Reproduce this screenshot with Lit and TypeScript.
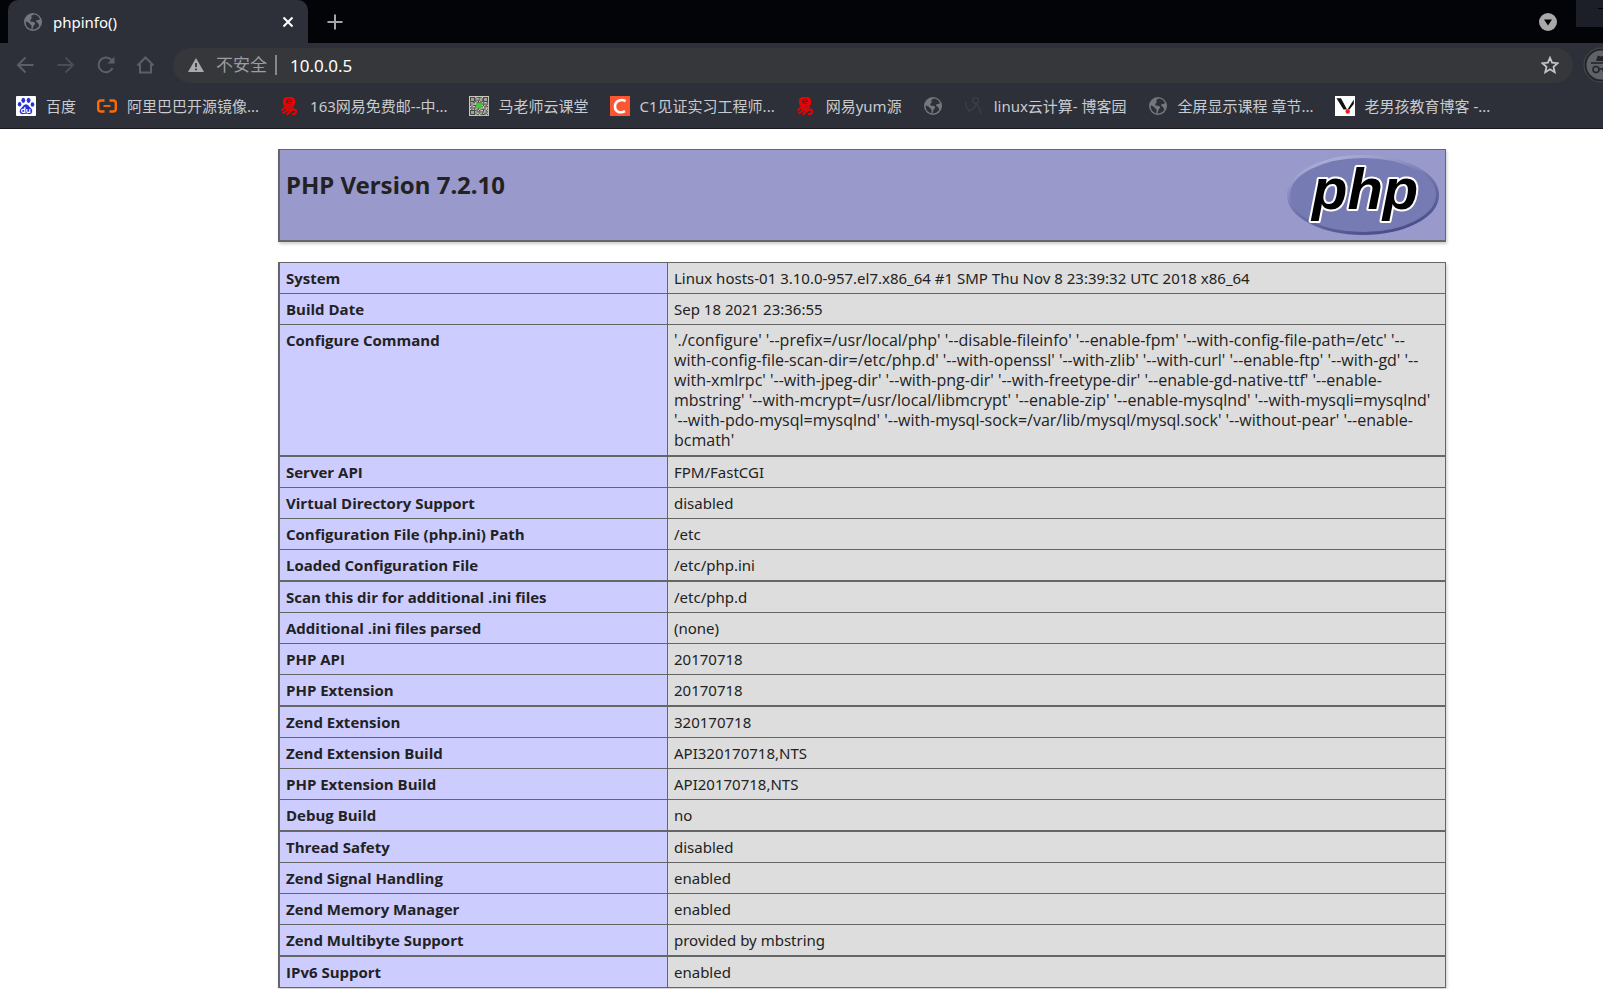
import { LitElement, html, css, svg, nothing } from "lit";
import { customElement, property } from "lit/decorators.js";

const globe = svg`<svg viewBox="0 0 20 20" width="20" height="20" aria-hidden="true">
  <circle cx="10" cy="10" r="9" fill="#74777c"/>
  <path d="M11.2 2.6C8.500 3 8 4.500 8.600 5.600C9.300 6.700 7.600 7.200 7.200 8.400C7 9.300 8 9.700 9.600 9.700C11.600 9.800 12.500 10.700 11.900 12C11.400 13 10.600 13.200 10.400 14.300C10.200 15.300 9.800 16.400 9.300 17.500C12.200 17.600 15 15.800 16.400 13.400C15.700 12.900 15.500 12.300 15.300 11.500C15 10.400 13.800 10.600 13.200 9.700C12.700 8.800 13.600 8 14.700 8C15.700 8 16.500 7.600 17 7.300C16.200 4.900 13.900 3 11.200 2.600Z" fill="#2d3039"/>
  <path d="M2.700 9.500C4.300 10 5.800 10.400 6.500 11.400C7.200 12.500 8.500 12.600 8.600 14C8.600 15.200 8.300 16.300 8.300 17.300C5 16.600 2.400 13.500 2.700 9.500Z" fill="#2d3039"/>
</svg>`;

const baidu = svg`<svg viewBox="0 0 20 20" width="20" height="20" aria-hidden="true">
  <rect width="20" height="20" rx="1" fill="#fff"/>
  <g fill="#2932d6">
    <ellipse cx="7.300" cy="4.300" rx="1.900" ry="2.600"/>
    <ellipse cx="12.600" cy="4.300" rx="1.900" ry="2.600"/>
    <ellipse cx="3.600" cy="8.300" rx="1.800" ry="2.300"/>
    <ellipse cx="16.500" cy="8.500" rx="1.800" ry="2.300"/>
    <path d="M10 8.200C12.300 8.200 12.800 10.600 14.700 12C17.200 14 16.600 18.200 13.400 18.200C12 18.200 11.200 17.800 10 17.800C8.800 17.800 8 18.200 6.600 18.200C3.300 18.200 2.800 14.200 5.300 12C7.200 10.500 7.700 8.200 10 8.200Z"/>
  </g>
  <path d="M8.800 11V16.300H6.800C5.200 16.300 5.200 13.400 6.800 13.400H8.800M10.800 13V15.400Q10.800 16.300 12 16.300H13.800V13" fill="none" stroke="#fff" stroke-width="1.200"/>
</svg>`;

const aliyun = svg`<svg viewBox="0 0 20 20" width="20" height="20" aria-hidden="true">
  <path d="M7.500 4.500H4Q1.200 4.500 1.200 7V13Q1.200 15.500 4 15.500H7.500M12.500 4.500H16Q18.800 4.500 18.800 7V13Q18.800 15.500 16 15.500H12.500" fill="none" stroke="#ff6a00" stroke-width="2.400"/>
  <path d="M6.500 10H13.500" stroke="#ff6a00" stroke-width="1.800"/>
</svg>`;

const netease = svg`<svg viewBox="0 0 20 20" width="20" height="20" aria-hidden="true">
  <rect x="3" y="1" width="12" height="9.500" rx="4" fill="#f00000"/>
  <path d="M6.600 5.500H11.400Q11.200 3.200 9 3.200Q6.700 3.300 6.600 5.600Q6.800 8 11.200 7.500" fill="none" stroke="#2d3039" stroke-width="1.100"/>
  <path d="M3.500 11.500H14M7 10.500L1.500 14.500M6 13.700H14.500Q16.500 13.800 16 16Q15.500 18.700 12 18M8.500 13.500L2.500 17.500M12.600 13.500L6.600 18.700" fill="none" stroke="#f00000" stroke-width="1.900"/>
</svg>`;

const qrCells = Array.from({ length: 196 }, (_, i) => i).filter((i) => {
  const x = i % 14;
  const y = Math.floor(i / 14);
  return (x * 7 + y * 11 + x * y * 5 + ((x * x + y) % 3)) % 5 < 3;
});

const qr = svg`<svg viewBox="0 0 20 20" width="20" height="20" aria-hidden="true">
  <rect width="20" height="20" fill="#c9c9c0"/>
  ${qrCells.map((i) => svg`<rect x=${1 + (i % 14) * 1.3} y=${1 + Math.floor(i / 14) * 1.3} width="1.2" height="1.2" fill="#45483f"/>`)}
  <path d="M1.500 1.500h4v4h-4zM14.500 1.500h4v4h-4zM1.500 14.500h4v4h-4z" fill="#a0a098" stroke="#45483f"/>
  <rect x="7.500" y="7.500" width="5" height="4.500" rx="1.500" fill="#22dd1c"/>
</svg>`;

const csdn = svg`<svg viewBox="0 0 20 20" width="20" height="20" aria-hidden="true">
  <rect width="20" height="20" fill="#fc5531"/>
  <path d="M15.600 5.200C12.500 3.300 5.300 3.300 5 10.300C4.800 16.600 11 17.300 15 15.200" fill="none" stroke="#fff" stroke-width="2.600"/>
</svg>`;

const cnblogs = svg`<svg viewBox="0 0 20 20" width="20" height="20" aria-hidden="true">
  <g fill="none" stroke="#443f43" stroke-width="1.200">
    <circle cx="11.500" cy="4.500" r="3"/>
    <path d="M2 6C1.500 10 3 13 5.500 14.500C9 13.500 11.500 11 12.500 7.500M13 8C15 11 16.500 14 17 18M5.500 14.500L4.500 16"/>
  </g>
</svg>`;

const oldboy = svg`<svg viewBox="0 0 20 20" width="20" height="20" aria-hidden="true">
  <rect width="20" height="20" fill="#fff"/>
  <path d="M1.500 2.300H6L12 13.500H8.500Z" fill="#111"/>
  <path d="M18.800 3.500V8L14.500 13.500H12.500Z" fill="#111"/>
  <circle cx="12.700" cy="15.500" r="2.200" fill="#f01c1c"/>
</svg>`;

const bookmarks = [
  { icon: baidu, label: "百度" },
  { icon: aliyun, label: "阿里巴巴开源镜像..." },
  { icon: netease, label: "163网易免费邮--中..." },
  { icon: qr, label: "马老师云课堂" },
  { icon: csdn, label: "C1见证实习工程师..." },
  { icon: netease, label: "网易yum源" },
  { icon: globe, label: "" },
  { icon: cnblogs, label: "linux云计算- 博客园" },
  { icon: globe, label: "全屏显示课程 章节..." },
  { icon: oldboy, label: "老男孩教育博客 -..." },
];

const configure = [
  "'./configure' '--prefix=/usr/local/php' '--disable-fileinfo' '--enable-fpm' '--with-config-file-path=/etc' '--",
  "with-config-file-scan-dir=/etc/php.d' '--with-openssl' '--with-zlib' '--with-curl' '--enable-ftp' '--with-gd' '--",
  "with-xmlrpc' '--with-jpeg-dir' '--with-png-dir' '--with-freetype-dir' '--enable-gd-native-ttf' '--enable-",
  "mbstring' '--with-mcrypt=/usr/local/libmcrypt' '--enable-zip' '--enable-mysqlnd' '--with-mysqli=mysqlnd'",
  "'--with-pdo-mysql=mysqlnd' '--with-mysql-sock=/var/lib/mysql/mysql.sock' '--without-pear' '--enable-",
  "bcmath'",
].join("\n");

const rows: [string, string][] = [
  ["System", "Linux hosts-01 3.10.0-957.el7.x86_64 #1 SMP Thu Nov 8 23:39:32 UTC 2018 x86_64"],
  ["Build Date", "Sep 18 2021 23:36:55"],
  ["Configure Command", configure],
  ["Server API", "FPM/FastCGI"],
  ["Virtual Directory Support", "disabled"],
  ["Configuration File (php.ini) Path", "/etc"],
  ["Loaded Configuration File", "/etc/php.ini"],
  ["Scan this dir for additional .ini files", "/etc/php.d"],
  ["Additional .ini files parsed", "(none)"],
  ["PHP API", "20170718"],
  ["PHP Extension", "20170718"],
  ["Zend Extension", "320170718"],
  ["Zend Extension Build", "API320170718,NTS"],
  ["PHP Extension Build", "API20170718,NTS"],
  ["Debug Build", "no"],
  ["Thread Safety", "disabled"],
  ["Zend Signal Handling", "enabled"],
  ["Zend Memory Manager", "enabled"],
  ["Zend Multibyte Support", "provided by mbstring"],
  ["IPv6 Support", "enabled"],
];

@customElement("browser-chrome")
class BrowserChrome extends LitElement {
  @property() title = "";
  @property() address = "";

  static styles = css`
    :host {
      display: block;
      background: #2d3039;
      border-bottom: 1px solid #16181d;
      font-family: "Noto Sans", "Noto Sans CJK SC", sans-serif;
      overflow: hidden;
    }
    svg { display: block; flex: none; }
    button {
      display: flex;
      align-items: center;
      justify-content: center;
      padding: 0;
      border: 0;
      background: none;
      color: inherit;
      font: inherit;
    }
    .strip {
      display: flex;
      align-items: center;
      height: 43px;
      padding-left: 8px;
      background: #020408;
    }
    .tab {
      display: flex;
      align-items: center;
      box-sizing: border-box;
      width: 300px;
      height: 43px;
      padding: 0 12px 0 15px;
      border-radius: 10px 10px 0 0;
      background: #2d3039;
      color: #fff;
      font-size: 15px;
    }
    .name { flex: 1; padding-left: 10px; }
    .plus { width: 34px; margin-left: 10px; }
    .search { margin-left: auto; }
    .window {
      align-self: flex-start;
      width: 27px;
      height: 27px;
      margin-left: 18px;
      background: #1c1f27;
      justify-content: flex-end;
    }
    .toolbar {
      display: flex;
      align-items: center;
      height: 44px;
      padding-left: 15px;
    }
    .nav { display: flex; gap: 20px; margin-right: 18px; }
    .omnibox {
      display: flex;
      flex: 1;
      align-items: center;
      height: 35px;
      padding: 0 14px 0 15px;
      border-radius: 18px;
      background: #35373a;
    }
    .warn {
      padding: 0 8px 0 12px;
      border-right: 2px solid #85878a;
      color: #9b9da1;
      font-size: 17px;
      line-height: 20px;
    }
    .url {
      flex: 1;
      min-width: 0;
      padding: 0 0 0 13px;
      border: 0;
      outline: 0;
      background: none;
      color: #fff;
      font: inherit;
      font-size: 17px;
    }
    .profile { margin: 0 -16px 0 10px; }
    .bookmarks {
      display: flex;
      align-items: center;
      gap: 21px;
      height: 38px;
      padding: 0 16px 3px;
      overflow: hidden;
    }
    .bookmark {
      display: flex;
      flex: none;
      align-items: center;
      gap: 10px;
      color: #c9cbce;
      font-size: 15px;
      line-height: 20px;
      text-decoration: none;
      white-space: nowrap;
    }
  `;

  render() {
    return html`
      <div class="strip">
        <div class="tab">
          ${globe}
          <span class="name">${this.title}</span>
          <button aria-label="Close tab">
            <svg viewBox="0 0 16 16" width="16" height="16"><path d="M3.500 3.500L12.500 12.500M12.500 3.500L3.500 12.500" stroke="#fff" stroke-width="2"/></svg>
          </button>
        </div>
        <button class="plus" aria-label="New tab">
          <svg viewBox="0 0 16 16" width="16" height="16"><path d="M8 0.500V15.500M0.500 8H15.500" stroke="#a4a5a7" stroke-width="2"/></svg>
        </button>
        <button class="search" aria-label="Search tabs">
          <svg viewBox="0 0 20 20" width="20" height="20"><circle cx="10" cy="10" r="9" fill="#a9a9a9"/><path d="M6 7.500H14L10 13.500Z" fill="#020408"/></svg>
        </button>
        <button class="window" aria-label="Minimize">
          <svg viewBox="0 0 5 27" width="5" height="27"><path d="M0 8.500H5" stroke="#000"/></svg>
        </button>
      </div>
      <div class="toolbar">
        <div class="nav">
          <button aria-label="Back"><svg viewBox="0 0 20 20" width="20" height="20"><path d="M18.500 10H3M10.500 2.500L3 10L10.500 17.500" fill="none" stroke="#5c5f66" stroke-width="2"/></svg></button>
          <button aria-label="Forward"><svg viewBox="0 0 20 20" width="20" height="20"><path d="M2.500 10H18M10.500 2.500L18 10L10.500 17.500" fill="none" stroke="#4a4d55" stroke-width="2"/></svg></button>
          <button aria-label="Reload"><svg viewBox="0 0 20 20" width="20" height="20"><path d="M17.500 13A7.300 7.300 0 1 1 16.500 5.200" fill="none" stroke="#5c5f66" stroke-width="2"/><path d="M19.500 1.500V8.500H12.500Z" fill="#5c5f66"/></svg></button>
          <button aria-label="Home"><svg viewBox="0 0 20 20" width="20" height="20"><path d="M2.500 10.500L10.500 2.500L18.500 10.500M5 9V17.500H16V9" fill="none" stroke="#5c5f66" stroke-width="2"/></svg></button>
        </div>
        <div class="omnibox">
          <svg viewBox="0 0 16 16" width="16" height="16" aria-hidden="true"><path d="M8 1L16 15H0Z" fill="#a9abae"/><path d="M8 6V10M8 11.500V13.300" stroke="#35373a" stroke-width="1.800"/></svg>
          <label class="warn" for="url">不安全</label>
          <input class="url" id="url" .value=${this.address} />
          <button aria-label="Bookmark this page">
            <svg viewBox="0 0 18 18" width="18" height="18"><path d="M9 1.800L11.100 6.700L16.600 7.200L12.500 10.800L13.700 16.200L9 13.300L4.300 16.200L5.500 10.800L1.400 7.200L6.900 6.700Z" fill="none" stroke="#c3c4c6" stroke-width="1.800"/></svg>
          </button>
        </div>
        <button class="profile" aria-label="Incognito">
          <svg viewBox="0 0 36 36" width="36" height="36">
            <circle cx="18" cy="18" r="17" fill="#5f6266" stroke="#45484c" stroke-width="1"/>
            <circle cx="18" cy="18" r="15.500" fill="none" stroke="#222429" stroke-width="2"/>
            <path d="M13 14L14.800 8.500L18 9.500L21.200 8.500L23 14Z" fill="#222429"/>
            <path d="M8 16H28" stroke="#222429" stroke-width="1.600"/>
            <g fill="none" stroke="#222429" stroke-width="1.500"><circle cx="13" cy="22.500" r="3"/><circle cx="23" cy="22.500" r="3"/><path d="M16 22.500Q18 21 20 22.500"/></g>
          </svg>
        </button>
      </div>
      <nav class="bookmarks">
        ${bookmarks.map(
          (b) => html`<a class="bookmark" href="#" aria-label=${b.label || "Bookmark"}>${b.icon}${b.label ? html`<span>${b.label}</span>` : nothing}</a>`
        )}
      </nav>
    `;
  }
}

@customElement("php-info")
class PhpInfo extends LitElement {
  static styles = css`
    :host {
      display: block;
      padding: 20px 0 0 121px;
      background: #fff;
      color: #222;
      font-family: "Noto Sans", sans-serif;
    }
    .page { width: 100%; max-width: 1168px; margin: 0 auto; }
    .banner {
      display: flex;
      align-items: flex-start;
      justify-content: space-between;
      box-sizing: border-box;
      height: 93px;
      padding: 5px 6px;
      border: 1px solid #666;
      border-width: 1px 1px 2px 2px;
      background: #99c;
      box-shadow: 1px 2px 3px #ccc;
    }
    h1 { margin: 15px 0 0; font-size: 24px; font-weight: 700; line-height: 30px; }
    .logo { display: block; }
    .word {
      font: italic bold 58px "Liberation Sans", sans-serif;
      stroke: #fff;
      stroke-width: 4px;
      stroke-linejoin: round;
      paint-order: stroke;
    }
    table {
      width: 100%;
      margin-top: 20px;
      border: 1px solid #666;
      border-width: 0 1px 1px 2px;
      border-spacing: 0;
      table-layout: fixed;
      box-shadow: 1px 2px 3px #ccc;
      font-size: 15px;
      line-height: 20px;
    }
    th, td {
      padding: 5px 6px;
      border-top: 1px solid #666;
      text-align: left;
      vertical-align: top;
    }
    tr:nth-child(4n) th, tr:nth-child(4n) td { border-top-width: 2px; }
    th { width: 375px; background: #ccf; font-family: "Open Sans", sans-serif; font-weight: 700; }
    td { border-left: 1px solid #666; background: #ddd; white-space: pre-line; }
    .command { font-family: "Open Sans", sans-serif; font-size: 16px; }
  `;

  render() {
    return html`
      <div class="page">
        <header class="banner">
          <h1>PHP Version 7.2.10</h1>
          <svg class="logo" viewBox="0 0 152 80" width="152" height="80" role="img" aria-label="PHP logo">
            <defs>
              <linearGradient id="rim" x1="0.2" y1="0" x2="0.7" y2="1">
                <stop offset="0" stop-color="#b2b4dc"/>
                <stop offset="0.45" stop-color="#777bb3"/>
                <stop offset="1" stop-color="#484c89"/>
              </linearGradient>
            </defs>
            <ellipse cx="76" cy="40" rx="74.500" ry="38.500" fill="#777bb3" stroke="url(#rim)" stroke-width="3"/>
            <text class="word" x="25" y="54">php</text>
          </svg>
        </header>
        <table>
          <tbody>
            ${rows.map(
              ([name, value]) => html`<tr><th scope="row">${name}</th><td class=${value === configure ? "command" : "value"}>${value}</td></tr>`
            )}
          </tbody>
        </table>
      </div>
    `;
  }
}

@customElement("app-root")
class AppRoot extends LitElement {
  static styles = css`
    :host { display: block; height: 100vh; overflow: hidden; background: #fff; }
  `;

  render() {
    return html`
      <browser-chrome title="phpinfo()" address="10.0.0.5"></browser-chrome>
      <php-info></php-info>
    `;
  }
}
